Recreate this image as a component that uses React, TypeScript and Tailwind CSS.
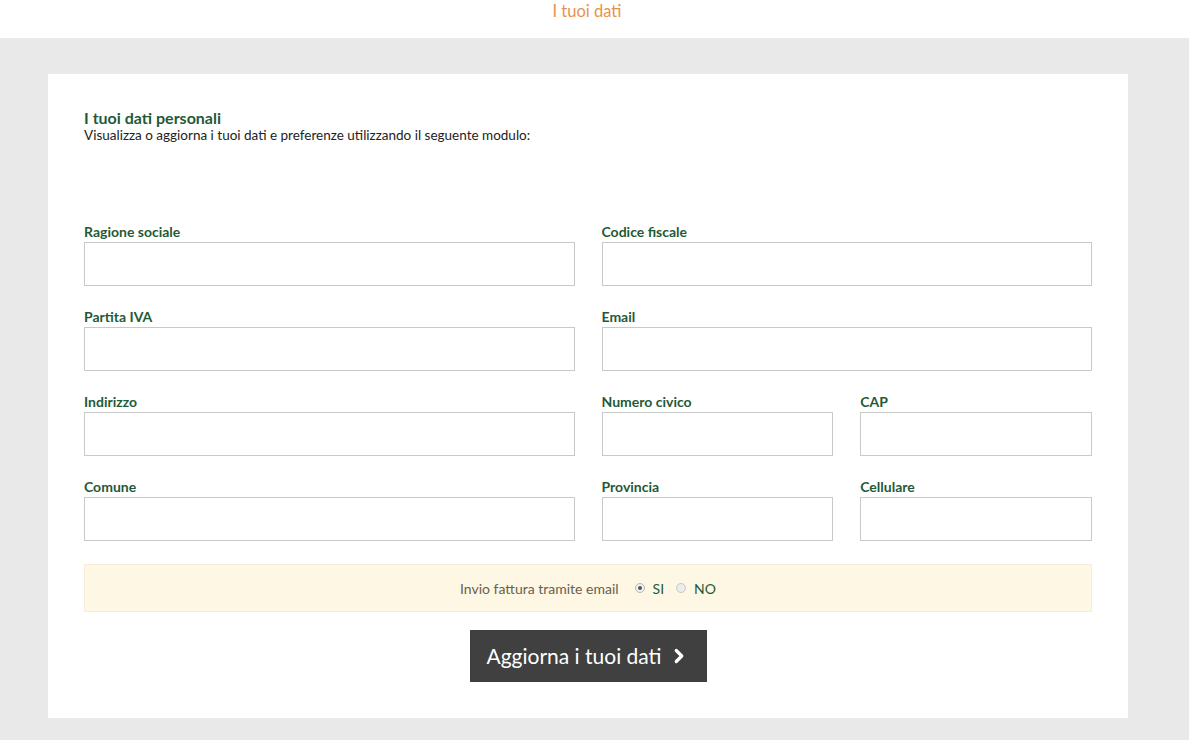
import { ChevronRight } from "lucide-react";

const font = { fontFamily: "Lato, 'Open Sans', sans-serif" };

function Field({ label }: { label: string }) {
  return (
    <div className="flex flex-col">
      <label className="text-[14px] font-bold text-[#1f5a36] leading-[16px] mb-[2px]">
        {label}
      </label>
      <input
        type="text"
        className="h-[44px] w-full border border-[#c9c9c9] bg-white outline-none px-2"
      />
    </div>
  );
}

export default function App() {
  return (
    <div className="min-h-screen bg-[#e9e9e9]" style={font}>
      {/* Top bar */}
      <div className="h-[38px] bg-white pr-[15px] flex justify-center">
        <span className="text-[16.5px] text-[#e8914a] leading-none pt-[3px]">
          I tuoi dati
        </span>
      </div>

      <div className="pt-[36px] pl-[48px] pr-[61px] pb-[22px]">
        <div className="bg-white px-[36px] pt-[35px] pb-[36px]">
          <h1 className="text-[16px] font-bold text-[#1f5a36] leading-[18px]">
            I tuoi dati personali
          </h1>
          <p className="text-[13.5px] text-[#222] leading-[16px]">
            Visualizza o aggiorna i tuoi dati e preferenze utilizzando il seguente modulo:
          </p>

          <div className="mt-[81px] grid grid-cols-2 gap-x-[27px] gap-y-[23px]">
            <Field label="Ragione sociale" />
            <Field label="Codice fiscale" />
            <Field label="Partita IVA" />
            <Field label="Email" />
            <Field label="Indirizzo" />
            <div className="grid grid-cols-2 gap-x-[27px]">
              <Field label="Numero civico" />
              <Field label="CAP" />
            </div>
            <Field label="Comune" />
            <div className="grid grid-cols-2 gap-x-[27px]">
              <Field label="Provincia" />
              <Field label="Cellulare" />
            </div>
          </div>

          <div className="mt-[23px] h-[48px] bg-[#fdf7e4] border border-[#f3ecd6] flex items-center justify-center gap-[10px] text-[14px] text-[#6b5e4e]">
            <span className="mr-[6px]">Invio fattura tramite email</span>
            <label className="flex items-center gap-[8px]">
              <span className="w-[10px] h-[10px] rounded-full border border-[#b8b8b8] bg-[#f0f0f0] flex items-center justify-center">
                <span className="w-[4px] h-[4px] rounded-full bg-[#555]" />
              </span>
              <span className="text-[#1f5a36]">SI</span>
            </label>
            <label className="flex items-center gap-[8px] ml-[2px]">
              <span className="w-[10px] h-[10px] rounded-full border border-[#c8c8c8] bg-[#ececec]" />
              <span className="text-[#1f5a36]">NO</span>
            </label>
          </div>

          <div className="mt-[18px] flex justify-center">
            <button className="h-[52px] w-[237px] bg-[#404040] text-white text-[21px] flex items-center justify-center gap-[6px]">
              Aggiorna i tuoi dati
              <ChevronRight className="w-[22px] h-[22px]" strokeWidth={3.5} />
            </button>
          </div>
        </div>
      </div>
    </div>
  );
}
